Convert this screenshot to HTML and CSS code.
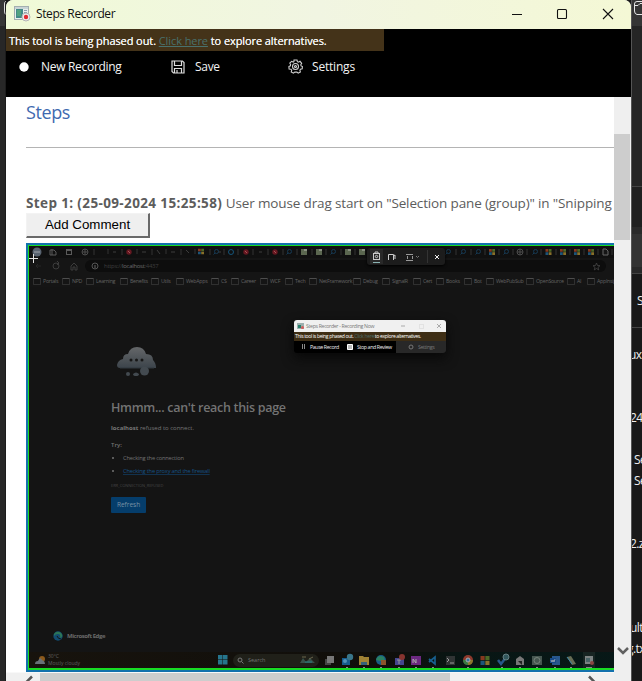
FILE: index.html
```html
<!DOCTYPE html>
<html lang="en">
<head>
<meta charset="utf-8">
<title>Steps Recorder</title>
<link rel="stylesheet" href="styles.css">
</head>
<body>
<div class="desktop">
  <aside class="behind-left"><svg width="6" height="20"><path d="M6 1.500H5.500Q4.500 2 4.500 4V11Q4.500 14 6 14.500" fill="none" stroke="#ddd"/></svg></aside>
  <main class="window">
    <header class="titlebar">
      <svg class="app-icon" width="17" height="16" viewBox="0 0 17 16"><rect x=".5" y=".5" width="14" height="13" fill="#e8eeed" stroke="#a4afb0"/><path d="M1 1h13v2H1z" fill="#c9d4d5"/><path d="M2 3h7v9H2z" fill="#438a88"/><path d="M3 4h4v6H3z" fill="#51a280"/><path d="M10 4h3v1h-3zM10 6h3v1h-3z" fill="#8ca0aa"/><circle cx="12" cy="11" r="4" fill="#eee" stroke="#b5b5b5"/><circle cx="12" cy="11" r="2.200" fill="#e22a31"/></svg>
      <span class="title">Steps Recorder</span>
      <svg class="controls" width="104" height="14" viewBox="0 0 104 14" fill="none" stroke="#111" stroke-width="1.100"><path d="M0 7.500h10"/><rect x="45.500" y="2.500" width="9" height="9" rx="1"/><path d="M91 2l10 10M101 2L91 12"/></svg>
    </header>
    <section class="commands">
      <div class="banner"><span>This tool is being phased out. <a>Click here</a> to explore alternatives.</span></div>
      <nav class="toolbar">
        <div class="cmd record"><svg width="10" height="10"><circle cx="5" cy="5" r="4.700" fill="#fff"/></svg><span>New Recording</span></div>
        <div class="cmd save"><svg width="14" height="14" viewBox="0 0 14 14" fill="none" stroke="#ddd" stroke-width="1.200"><path d="M1 1h10.500L13 2.500V13H2.500L1 11.500zM3.500 1v4.500h7V1M3.500 13V8.500h7V13M6 10v3"/></svg><span>Save</span></div>
        <div class="cmd settings"><svg width="15" height="15" viewBox="0 0 15 15" fill="none" stroke="#d0d0d0" stroke-width="1.100"><path d="M6 1h3l.4 1.700 1 .5 1.600-.9 1.700 2-.9 1.500.3 1.100 1.300.6-.2 2.400-1.700.4-.6 1 .5 1.600-2.200 1.300-1.300-1.100H6.800l-1.400 1.100-2.200-1.300.5-1.600-.7-1L1.100 10 .9 7.500l1.500-.7.200-1.200-.8-1.400 1.800-1.900 1.600.8.700-.4z"/><circle cx="7.500" cy="7.500" r="3"/><circle cx="7.500" cy="7.500" r="1"/></svg><span>Settings</span></div>
      </nav>
    </section>
    <div class="viewer">
      <article class="document">
        <h1>Steps</h1>
        <hr>
        <p class="step"><b>Step 1: (25-09-2024 15:25:58)</b> <span>User mouse drag start on "Selection pane (group)" in "Snipping</span></p>
        <button>Add Comment</button>
        <div class="capture">
          <div class="screen">
            <svg class="tabs" width="585" height="12" viewBox="29 246 585 12">
              <defs>
                <symbol id="ms" viewBox="0 0 8 8"><path d="M0 0h3.700v3.700H0z" fill="#86391f"/><path d="M4.300 0H8v3.700H4.300z" fill="#4c6827"/><path d="M0 4.300h3.700V8H0z" fill="#1c5579"/><path d="M4.300 4.300H8V8H4.300z" fill="#88702a"/></symbol>
                <symbol id="mag" viewBox="0 0 8 8"><circle cx="4.500" cy="3.500" r="2" fill="none" stroke="#163a54"/><path d="M3 5L1.500 6.500" stroke="#163a54"/></symbol>
                <symbol id="red" viewBox="0 0 8 8"><circle cx="4" cy="4" r="2.700" fill="#661821"/><path d="M3 3l2 2" stroke="#a75154"/></symbol>
                <symbol id="photo" viewBox="0 0 8 8"><path d="M1 1h6v6H1z" fill="#5b6750"/><path d="M4 1h3v2H4z" fill="#889080"/></symbol>
                <symbol id="globe" viewBox="0 0 8 8"><g fill="none" stroke="#4c4c4c"><circle cx="4" cy="4" r="3"/><path d="M1 4h6M4 1v6"/></g></symbol>
              </defs>
              <circle cx="37" cy="252" r="4.500" fill="#586370"/><path d="M34 252h6" stroke="#9ca1a8"/>
              <g fill="none" stroke="#5a5a5a"><path d="M50 250h4l2 2v3h-6zM52 249v6"/><rect x="66.500" y="249.500" width="5" height="5"/><path d="M66 250h6" stroke-width="2"/></g>
              <use href="#globe" x="81" y="248" width="8" height="8"/>
              <path d="M94 249v6M108 249v5M122 249v6M137 249v5M152 249v6M166 249v5M181 249v6M195 249v5M210 249v6M224 249v6M238 249v6M253 249v6M268 249v6M283 249v6M297 249v6M312 249v6M326 249v6M341 249v6M355 249v6M456 249v6M471 249v6M485 249v6M499 249v6M513 249v6M527 249v6M541 249v6M556 249v6M570 249v6M584 249v6M598 249v6M612 249v6" stroke="#333"/>
              <path d="M113 252h3M142 252h4M157 250l3 4M171 252h4M186 250l3 3M218 252h3M259 252h3" stroke="#3d3d3d"/>
              <use href="#red" x="125" y="248" width="8" height="8"/><use href="#ms" x="198" y="248.500" width="6" height="6"/>
              <use href="#mag" x="212" y="248" width="8" height="8"/><circle cx="231" cy="252" r="2.500" fill="none" stroke="#155479"/><use href="#red" x="242" y="248" width="8" height="8"/><use href="#red" x="271" y="248" width="8" height="8"/><use href="#mag" x="285" y="248" width="8" height="8"/><use href="#photo" x="300" y="248" width="8" height="8"/><use href="#photo" x="315" y="248" width="8" height="8"/><use href="#mag" x="329" y="248" width="8" height="8"/><use href="#photo" x="344" y="248" width="8" height="8"/><use href="#photo" x="358" y="248" width="8" height="8"/>
              <use href="#mag" x="444" y="248" width="8" height="8"/><use href="#mag" x="459" y="248" width="8" height="8"/><use href="#mag" x="474" y="248" width="8" height="8"/><use href="#ms" x="489" y="249" width="6" height="6"/><use href="#mag" x="502" y="248" width="8" height="8"/><use href="#globe" x="516" y="248" width="8" height="8"/><use href="#mag" x="531" y="248" width="8" height="8"/><use href="#ms" x="545" y="249" width="7" height="6"/><use href="#ms" x="560" y="249" width="6" height="6"/><use href="#ms" x="574" y="249" width="6" height="6"/><use href="#ms" x="588" y="249" width="6" height="6"/><path d="M603 249h3l2 2v4h-5z" fill="#151515" stroke="#666"/>
            </svg>
            <div class="addressbar">
              <svg width="56" height="14" fill="none" stroke="#3c3c3c"><path d="M7 7h5M7 7l2-2M7 7l2 2" stroke="#262626"/><circle cx="27" cy="7" r="3"/><path d="M28 2l2 2-2 2"/><path d="M42 7l3-3 3 3v4h-2V8h-2v3h-2z"/></svg>
              <div class="url"><svg width="8" height="8"><circle cx="4" cy="4" r="3" fill="none" stroke="#555"/><path d="M4 3v3" stroke="#666"/></svg><span>https://<b>localhost</b>:4437</span><svg class="star" width="9" height="9"><path d="M4.500 1l1 2.500 2.500.2-2 1.700.7 2.500-2.200-1.400-2.200 1.400.7-2.500L1 3.700l2.500-.2z" fill="none" stroke="#454545" stroke-width=".8"/></svg></div>
            </div>
            <div class="bookmarks"><span>Portals</span><span>NPD</span><span>Learning</span><span>Benefits</span><span>Utils</span><span>WebApps</span><span>CS</span><span>Career</span><span>WCF</span><span>Tech</span><span>NetFramework</span><span>Debug</span><span>SignalR</span><span>Cert</span><span>Books</span><span>Bot</span><span>WebPubSub</span><span>OpenSource</span><span>AI</span><span>AppInsig</span></div>
            <section class="error-page">
              <svg class="cloud" width="42" height="34" viewBox="0 0 42 34"><defs><linearGradient id="cg" x2="0" y2="1"><stop stop-color="#656769"/><stop offset="1" stop-color="#3c444b"/></linearGradient></defs><path d="M4 22Q1 22 1 19Q2 14 7 13Q7 8 12 8Q14 1 21 1Q28 1 30 8Q37 8 37 14Q40 17 40 22z" fill="url(#cg)"/><path d="M4 22h34" stroke="#31393f"/><g fill="#171717"><circle cx="15" cy="14" r="1.500"/><circle cx="20.500" cy="14" r="1.500"/><circle cx="26" cy="14" r="1.500"/></g><g fill="#434a50"><circle cx="28.500" cy="25" r="4.500"/><circle cx="12" cy="28" r="2"/><path d="M17 28Q20 25 23 28Q23 30 20 30Q17 30 17 28z"/></g></svg>
              <h2>Hmmm... can't reach this page</h2>
              <p class="refused"><b>localhost</b> refused to connect.</p>
              <p class="try">Try:</p>
              <ul><li>Checking the connection</li><li><a>Checking the proxy and the firewall</a></li></ul>
              <p class="code">ERR_CONNECTION_REFUSED</p>
              <div class="refresh">Refresh</div>
            </section>
            <div class="edge"><svg width="10" height="10" viewBox="0 0 10 10"><circle cx="5" cy="5" r="4.700" fill="#124c70"/><path d="M1 3Q4-1 8 2Q11 6 7 7Q8 3 5 3Q2 3 1 5z" fill="#2c7657"/><path d="M4 5Q5 8 8 8" stroke="#151515" fill="none"/></svg><b>Microsoft Edge</b></div>
            <footer class="taskbar">
              <svg width="12" height="12"><circle cx="8" cy="5" r="3" fill="#8c5a1c"/><path d="M1 10Q1 7 4 7Q6 2 8 6Q11 7 11 10z" fill="#687078"/></svg>
              <div class="weather"><span>30°C</span><span>Mostly cloudy</span></div>
              <svg class="start" width="10" height="10"><path d="M0 0h4.500v4.500H0zM5 0h4.500v4.500H5zM0 5h4.500v4.500H0zM5 5h4.500v4.500H5z" fill="#26758d"/></svg>
              <div class="search"><svg width="7" height="7"><circle cx="3" cy="3" r="2" fill="none" stroke="#777"/><path d="M4.500 4.500l2 2" stroke="#777"/></svg><span>Search</span><svg class="scene" width="15" height="8"><path d="M0 7L3 2l3 4 4-4 5 5z" fill="#38504a"/><path d="M2 1h4M9 3l4-2" stroke="#6a664d"/><path d="M5 6h7" stroke="#277c83"/></svg></div>
              <svg class="apps" width="280" height="16" viewBox="324 652 280 16">
                <path d="M325 659h6v6h-6z" fill="#444"/><path d="M327 656h7v7h-7z" fill="#777"/>
                <path d="M342 658h8v7h-8z" fill="#155b8c"/><circle cx="345" cy="661" r="2" fill="#4f91b9"/><circle cx="350" cy="657" r="3.200" fill="#397589"/>
                <path d="M359 656h4l1 1h5v8h-10z" fill="#a08234"/><path d="M361 662h6v3h-6z" fill="#34617b"/>
                <circle cx="381" cy="660" r="5" fill="#175c88"/><path d="M376 660Q378 654 384 657L385 661H380z" fill="#2b8062"/><path d="M381 660h5v5h-5z" fill="#8b562b"/>
                <path d="M395 658h9v7h-9z" fill="#45468e"/><path d="M397 660h4m-2 0v4" stroke="#999"/><circle cx="402" cy="657" r="3" fill="#86342f"/>
                <path d="M411 656h10v9h-10z" fill="#6c2981"/><path d="M413 663v-4l3 4v-4" stroke="#aaa" fill="none"/>
                <path d="M429 662l6-5v7l-6-5" stroke="#18608f" stroke-width="1.700" fill="none"/>
                <path d="M446 656h9v9h-9z" fill="#303434"/><path d="M447 658l2 2-2 2M450 663h4" stroke="#999" fill="none"/>
                <circle cx="468" cy="660" r="5" fill="#8c392c"/><path d="M464 660h4v5q-5 0-5-5" fill="#377b44"/><path d="M468 660h5q0 5-5 5z" fill="#8c782e"/><circle cx="468" cy="660" r="2" fill="#3974a1" stroke="#aaa"/>
                <use href="#ms" x="480" y="656" width="10" height="9"/>
                <path d="M498 660l3 4 6-8" stroke="#28568a" stroke-width="2.500" fill="none"/><circle cx="506" cy="657" r="3" fill="#31565b" stroke="#668083"/>
                <path d="M516 665v-6l4-3 4 3v6z" fill="#777"/><path d="M518 661h4v4" fill="#222"/>
                <path d="M532 656h10v9h-10z" fill="#465650"/><circle cx="537" cy="660.500" r="3" fill="none" stroke="#75827a"/>
                <path d="M552 656h8v9h-8z" fill="#28578c"/><path d="M550 658h6v5h-6z" fill="#164988"/><path d="M551 660l1 2 1-2 1 2 1-3" stroke="#bbb" fill="none" stroke-width=".7"/>
                <path d="M567 657l4-1 5 8-4 1z" fill="#676d55"/><path d="M567 657l5 7" stroke="#3d84a4"/>
                <path d="M583 652h12v16h-12z" fill="#172422"/><path d="M585 656h8v8h-8z" fill="#7c8282"/><path d="M586 658h4v4h-4z" fill="#496366"/><circle cx="592" cy="663" r="2" fill="#8c4541"/>
                <path d="M346 667.500h2M363 667.500h2M380 667.500h2M398 667.500h2M415 667.500h2M432 667.500h2M467 667.500h2M501 667.500h2M519 667.500h2M536 667.500h2M554 667.500h2M570 667.500h2M586 667.500h6" stroke="#888"/>
              </svg>
            </footer>
            <div class="snip"><svg width="78" height="17" viewBox="367 248 78 17" fill="none" stroke="#ccc"><path d="M370 249h13v15h-13z" fill="#292929" stroke="none"/><rect x="373.500" y="253.500" width="6" height="6"/><path d="M375 253v-1h3v1" /><circle cx="376.500" cy="256.500" r="1.200"/><path d="M373 262.500h7" stroke="#8bb3b3"/><path d="M388.500 260v-5.500h5V260M393 256l2-1v4"/><path d="M406 254.500h7M406 260.500h7M407.500 256v3M412.500 256v3" stroke="#999"/><path d="M416 256l1.500 1.500 1.500-1.500" stroke="#777"/><path d="M427.500 250v13" stroke="#333"/><path d="M435 255l4 4m0-4l-4 4" stroke="#eee"/></svg></div>
            <div class="mini">
              <div class="mini-title"><svg width="7" height="6"><path d="M0 0h7v6H0z" fill="#9caead"/><path d="M1 2h3v3H1z" fill="#277f6c"/><circle cx="5.500" cy="4.500" r="1.500" fill="#d15b5b"/></svg><span>Steps Recorder - Recording Now</span><svg class="mini-controls" width="44" height="8" fill="none" stroke="#aaa"><path d="M2 4h4M38 2l4 4m0-4l-4 4"/><rect x="20.500" y="2.500" width="4" height="4" stroke="#e2e2e2"/></svg></div>
              <div class="mini-banner"><span>This tool is being phased out. <a>Click here</a> to explore alternatives.</span></div>
              <div class="mini-actions"><div class="pause"><svg width="5" height="6"><path d="M1.500 0v5M3.500 0v5" stroke="#888"/></svg><span>Pause Record</span></div><div class="stop"><svg width="6" height="6"><path d="M.5.500h5v5h-5z" fill="#bbb" stroke="#fff"/></svg><span>Stop and Review</span></div><div class="mini-settings"><svg width="6" height="6"><circle cx="3" cy="3" r="2" fill="none" stroke="#777"/></svg><span>Settings</span></div></div>
            </div>
            <svg class="cursor" width="11" height="11"><path d="M1 5.500h9M5.500 1v9" stroke="#e2e2e2"/></svg>
          </div>
        </div>
      </article>
      <div class="vscroll"><div class="thumb"></div><svg width="12" height="10"><path d="M1 2l5 5 5-5" fill="none" stroke="#606060" stroke-width="2.500"/></svg></div>
      <div class="hscroll"><svg width="34" height="9"><path d="M26 3.500l-5 5 5 5" fill="none" stroke="#555" stroke-width="2.500"/></svg><div class="thumb"></div><svg class="right-arrow" width="12" height="9"><path d="M2 3.500l5 5-5 5" fill="none" stroke="#555" stroke-width="2.500"/></svg></div>
    </div>
  </main>
  <aside class="behind-right">
    <div class="r-tab"><svg width="10" height="20" fill="none" stroke="#e6e6e6"><path d="M10 14.500H5Q2.500 14 2.500 11V4Q2.500 1.500 5 1.500h5M3 5.500h3l2-2h2"/></svg></div><div class="r-body"></div><div class="r-tool"></div><div class="r-row"></div>
    <div class="fragments"><span class="f1">S</span><span class="f2">ux</span><span class="f3">24(</span><span class="f4">Se</span><span class="f5">Se</span><span class="f6">2.z</span><span class="f7">ult</span><span class="f8">g.tx</span></div>
  </aside>
</div>
</body>
</html>
```

FILE: styles.css
```css
* { box-sizing: border-box; }
body { margin: 0; width: 642px; height: 681px; overflow: hidden; background: #191919; font-family: "Open Sans", "Noto Sans", sans-serif; }
svg { display: block; flex: none; }
p, h1, h2, ul { margin: 0; padding: 0; }
.desktop { display: grid; grid-template-columns: 6px 625px 11px; height: 681px; }
.behind-left { background: linear-gradient(#363636 26px, #272727 26px); border-right: 1px solid #1c1c1c; }
.window { height: 681px; background: #fff; border-radius: 7px 7px 0 0; overflow: hidden; }
.titlebar { height: 29px; display: flex; align-items: center; padding: 0 15px 2px 8px; background: linear-gradient(90deg, #f0fad7, #f1f5e2 50%, #f4f8d5); }
.title { margin-left: 5px; font-size: 12px; color: #111; letter-spacing: -.4px; }
.controls { margin-left: auto; }
.commands { height: 68px; background: #000; color: #f3f3f3; }
.banner { width: 378px; height: 22px; padding-left: 3px; background: #443319; font-size: 11px; line-height: 24px; white-space: nowrap; }
.banner span { letter-spacing: -.08px; text-shadow: 0 0 .5px #fff; }
.banner a { color: #49716d; text-decoration: underline; text-shadow: none; }
.toolbar { display: flex; height: 31px; font-size: 12px; }
.cmd { display: flex; align-items: center; white-space: nowrap; }
.record { width: 165px; padding-left: 13px; gap: 12px; letter-spacing: -.3px; }
.save { width: 117px; gap: 10px; letter-spacing: -.3px; }
.settings { gap: 9px; letter-spacing: -.2px; }
.viewer { height: 584px; display: grid; grid-template-columns: 608px 17px; grid-template-rows: 575px 9px; }
.document { overflow: hidden; padding-left: 20px; }
h1 { height: 50px; padding-top: 2px; font-size: 18px; line-height: 26px; font-weight: 400; letter-spacing: -.4px; color: #3e69b0; }
hr { margin: 0; border: 0; border-top: 1px solid #b4b4b4; }
.step { height: 65px; padding-top: 45px; white-space: nowrap; font-size: 13.500px; line-height: 20px; color: #5c5c5c; }
.step b { letter-spacing: .37px; }
.step span { letter-spacing: -.14px; }
button { display: block; width: 124px; height: 25px; border: solid; border-width: 1px 2px 2px 1px; border-color: #f3f3f3 #696969 #696969 #f3f3f3; background: #efefef; font: 13.333px "Liberation Sans", sans-serif; color: #000; padding: 0 0 2px; }
.capture { margin-top: 5px; width: 610px; height: 429px; border: 2px solid #1371ad; }
.screen { position: relative; display: flex; flex-direction: column; height: 425px; border: 1px solid #18dc24; border-bottom-width: 2px; background: #141414; color: #737373; }
.tabs { background: #101010; }
.addressbar { height: 17px; display: flex; align-items: center; background: #151515; padding-bottom: 1px; }
.url { display: flex; align-items: center; gap: 5px; width: 521px; height: 12px; border-radius: 6px; background: #0d0d0d; padding: 0 5px 0 6px; font-size: 6px; letter-spacing: -.3px; color: #3e3e3e; }
.url b { font-weight: 400; color: #6c6c6c; }
.star { margin-left: auto; }
.bookmarks { display: grid; grid-template-columns: 29px 24px 34px 31px 25px 35px 20px 29px 25px 24px 44px 29px 31px 23px 28px 22px 40px 41px 20px 30px; height: 12px; padding-left: 4px; background: #151515; }
.bookmarks span { font-size: 5.300px; line-height: 12px; color: #626262; white-space: nowrap; display: flex; align-items: center; gap: 2px; letter-spacing: -.3px; }
.bookmarks span::before { content: ""; flex: none; width: 6px; height: 5px; border: 1px solid #303030; border-top-color: #4d4d4d; border-radius: 1px; }
.error-page { height: 340px; padding: 59px 0 0 82px; }
.cloud { margin-left: 5px; }
h2 { margin-top: 18px; font-size: 12.500px; line-height: 20px; font-weight: 600; letter-spacing: -.3px; }
.refused { margin-top: 6px; font-size: 6px; line-height: 9px; color: #777; }
.try { margin-top: 8px; font-size: 6px; line-height: 9px; font-weight: 600; }
ul { padding-left: 12px; font-size: 5.700px; line-height: 9px; letter-spacing: -.19px; }
li { margin-top: 4px; }
li::marker { font-size: 6px; }
li a { color: #155387; text-decoration: underline; text-decoration-color: #12324e; }
.code { margin-top: 6px; font-size: 4px; line-height: 8px; color: #454545; letter-spacing: -.05px; }
.refresh { margin-top: 7px; width: 35px; height: 16px; border-radius: 1px; background: #053d6b; color: #7891a5; font-size: 6.500px; line-height: 15px; text-align: center; }
.edge { height: 25px; padding: 0 0 7px 24px; display: flex; align-items: center; gap: 4px; font-size: 6px; color: #696969; letter-spacing: -.45px; }
.taskbar { margin-top: auto; height: 16px; display: flex; align-items: center; background: linear-gradient(90deg, #17130d, #100e0a 58%, #081614 72%, #071817); padding-left: 5px; }
.weather { width: 172px; padding-left: 2px; display: grid; grid-template-rows: 7px 7px; font-size: 5px; line-height: 7px; color: #606060; }
.start { margin-right: 5px; }
.search { width: 86px; height: 13px; border-radius: 7px; background: #202019; display: flex; align-items: center; gap: 4px; padding: 0 4px; font-size: 5.500px; }
.scene { margin-left: auto; }
.apps { margin-left: 5px; }
.snip { position: absolute; left: 338px; top: 2px; border-radius: 3px; overflow: hidden; background: #1c1c1c; box-shadow: 0 1px 3px #000; }
.mini { position: absolute; left: 265px; top: 74px; width: 152px; height: 33px; border-radius: 3px; overflow: hidden; background: #000; box-shadow: 0 5px 12px #080808; }
.mini-title { height: 12px; background: #f0f0f0; display: flex; align-items: center; gap: 2px; padding-left: 3px; font-size: 5.200px; letter-spacing: -.32px; color: #777; }
.mini-title span { white-space: nowrap; }
.mini-controls { margin-left: auto; margin-right: 3px; }
.mini-banner { height: 9px; background: #3e2e15; padding-left: 1px; font-size: 5.100px; line-height: 9px; letter-spacing: -.36px; color: #fff; white-space: nowrap; }
.mini-banner a { color: #4b6b66; }
.mini-actions { height: 12px; display: grid; grid-template-columns: 53px 49px 50px; font-size: 5.300px; letter-spacing: -.4px; color: #eee; white-space: nowrap; }
.mini-actions div { display: flex; align-items: center; gap: 4px; }
.mini-actions .pause { padding-left: 7px; }
.mini-actions .mini-settings { background: #282828; color: #777; padding-left: 12px; }
.cursor { position: absolute; left: -1px; top: 7px; }
.vscroll { position: relative; background: #efefef; height: 584px; }
.vscroll .thumb { height: 143px; border-top: 37px solid #efefef; background: #cdcdcd; margin-right: 1px; }
.vscroll svg { margin: 406px 0 0 3px; }
.hscroll { grid-column: 1; display: flex; background: #f0f0f0; border-top: 1px solid #f8f8f8; }
.hscroll .thumb { width: 410px; background: #cdcdcd; }
.right-arrow { margin-left: 137px; }
.behind-right { position: relative; border-left: 1px solid #555; background: #191919; overflow: hidden; }
.r-tab { height: 26px; background: #353535; }
.r-body { height: 161px; background: #252525; border-bottom: 1px solid #444; }
.r-tool { height: 87px; background: linear-gradient(#202020 40px, #2a2a2a 40px, #2a2a2a 47px, #333 47px, #333 80px, #292929 80px); border-bottom: 1px solid #444; }
.r-row { height: 54px; border-bottom: 1px solid #444; }
.fragments { position: absolute; inset: 0; font-size: 12px; color: #eee; }
.fragments span { position: absolute; left: 0; line-height: 16px; white-space: nowrap; letter-spacing: -.6px; }
.fragments .f1 { left: 5px; top: 293px; }
.fragments .f2 { left: -3px; top: 347px; }
.fragments .f3 { left: -2px; top: 410px; }
.fragments .f4 { left: 2px; top: 452px; }
.fragments .f5 { left: 2px; top: 473px; }
.fragments .f6 { left: -2px; top: 536px; }
.fragments .f7 { left: -2px; top: 620px; }
.fragments .f8 { left: -5px; top: 641px; }
```
